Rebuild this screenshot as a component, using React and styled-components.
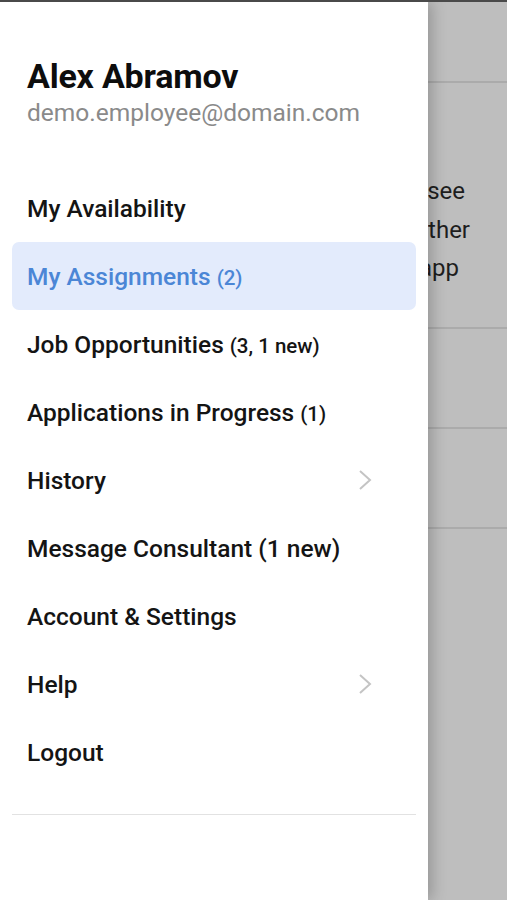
import React from "react";
import styled, { createGlobalStyle } from "styled-components";

const GlobalStyle = createGlobalStyle`
  html, body {
    margin: 0;
    padding: 0;
    background: #bebebe;
  }
  body {
    font-family: Roboto, "Liberation Sans", sans-serif;
    -webkit-font-smoothing: antialiased;
  }
`;

const Screen = styled.div`
  position: relative;
  width: 507px;
  height: 900px;
  overflow: hidden;
  background: #bebebe;
  border-top: 2px solid #4a4a4a;
  box-sizing: border-box;
`;

/* the app page lying under the drawer */
const Page = styled.div`
  display: flex;
  flex-direction: column;
`;

const PageHeader = styled.div`
  height: 79px;
  border-bottom: 2px solid #ababab;
`;

const Intro = styled.div`
  height: 246px;
  padding-top: 89px;
  box-sizing: border-box;
  border-bottom: 2px solid #ababab;
  color: #1e1e1e;
  font-size: 24px;
  line-height: 38.5px;
`;

const IntroLine = styled.div`
  width: ${(p) => p.$end}px;
  text-align: right;
  white-space: nowrap;
`;

const PageRow = styled.div`
  height: 98px;
  border-bottom: 2px solid #ababab;
`;

const Drawer = styled.nav`
  position: absolute;
  top: 0;
  left: 0;
  bottom: 0;
  width: 428px;
  background: #ffffff;
  box-shadow: 4px 0 14px rgba(0, 0, 0, 0.22);
  padding: 0 12px;
  box-sizing: border-box;
  display: flex;
  flex-direction: column;
`;

const Profile = styled.div`
  padding: 52px 15px 46px;
`;

const Name = styled.div`
  font-size: 34px;
  font-weight: 700;
  color: #0d0d0d;
  line-height: 44px;
  letter-spacing: -0.2px;
`;

const Email = styled.div`
  font-size: 24.5px;
  color: #8a8a8a;
  line-height: 30px;
`;

const Menu = styled.ul`
  list-style: none;
  margin: 0;
  padding: 0 0 28px;
  border-bottom: 1px solid #e2e2e2;
`;

const Item = styled.li`
  height: 68px;
  display: flex;
  align-items: center;
  justify-content: space-between;
  padding: 0 44px 0 15px;
  border-radius: 7px;
  font-size: 24.5px;
  font-weight: 500;
  color: ${(p) => (p.$active ? "#4b86d6" : "#141414")};
  background: ${(p) => (p.$active ? "#e3ebfc" : "transparent")};
`;

const Count = styled.span`
  font-size: 20.5px;
  margin-left: 6px;
`;

const Chevron = styled.svg`
  width: 14px;
  height: 22px;
`;

const items = [
  { label: "My Availability" },
  { label: "My Assignments", count: "(2)", active: true },
  { label: "Job Opportunities", count: "(3, 1 new)" },
  { label: "Applications in Progress", count: "(1)" },
  { label: "History", arrow: true },
  { label: "Message Consultant (1 new)" },
  { label: "Account & Settings" },
  { label: "Help", arrow: true },
  { label: "Logout" },
];

export default function App() {
  return (
    <>
      <GlobalStyle />
      <Screen>
        <Page>
          <PageHeader />
          <Intro>
            <IntroLine $end={465}>Tap any shift to see</IntroLine>
            <IntroLine $end={470}>details and other</IntroLine>
            <IntroLine $end={459}>info in the app</IntroLine>
          </Intro>
          <PageRow />
          <PageRow />
        </Page>
        <Drawer>
          <Profile>
            <Name>Alex Abramov</Name>
            <Email>demo.employee@domain.com</Email>
          </Profile>
          <Menu>
            {items.map((it) => (
              <Item key={it.label} $active={it.active}>
                <span>
                  {it.label}
                  {it.count && <Count>{it.count}</Count>}
                </span>
                {it.arrow && (
                  <Chevron viewBox="0 0 14 22">
                    <path d="M2 2 L12 11 L2 20" fill="none" stroke="#c4c4c4" strokeWidth="2" />
                  </Chevron>
                )}
              </Item>
            ))}
          </Menu>
        </Drawer>
      </Screen>
    </>
  );
}
